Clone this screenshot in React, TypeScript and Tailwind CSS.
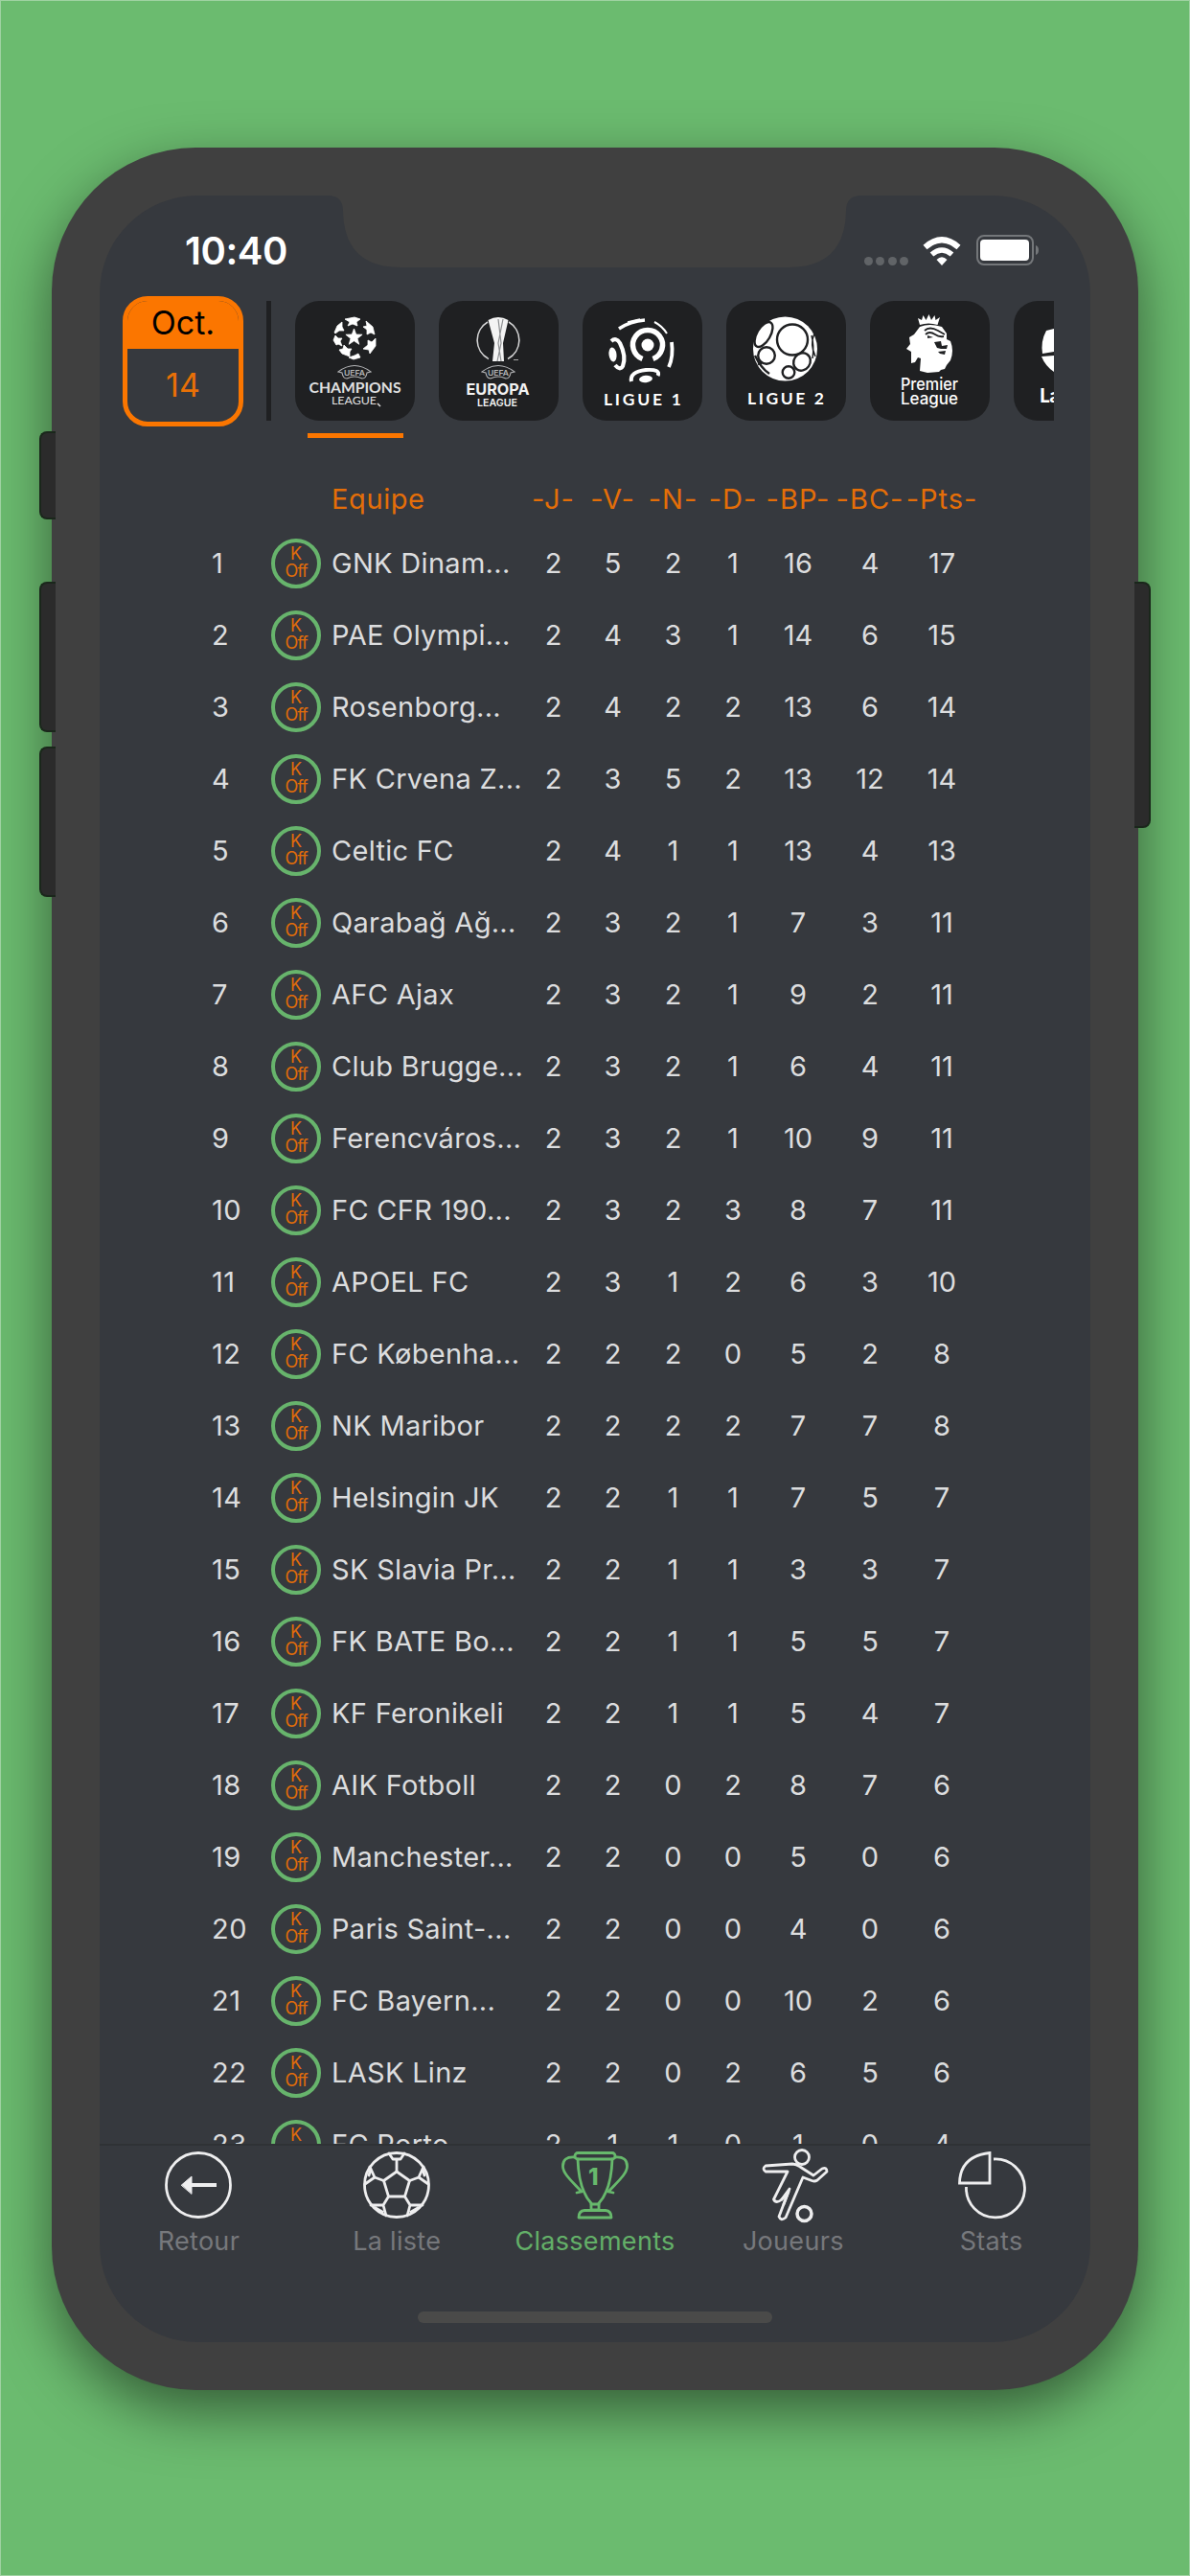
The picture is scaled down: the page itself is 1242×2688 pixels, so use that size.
import React from 'react';
import clsx from 'clsx';

type Standing = {
  name: string;
  stats: number[];
};

const columns = [
  { label: '-J-', width: 'w-[61px]' },
  { label: '-V-', width: 'w-[63px]' },
  { label: '-N-', width: 'w-[63px]' },
  { label: '-D-', width: 'w-[62px]' },
  { label: '-BP-', width: 'w-[74px]' },
  { label: '-BC-', width: 'w-[76px]' },
  { label: '-Pts-', width: 'w-[74px]' },
];

const standings: Standing[] = [
  { name: 'GNK Dinam...', stats: [2, 5, 2, 1, 16, 4, 17] },
  { name: 'PAE Olympi...', stats: [2, 4, 3, 1, 14, 6, 15] },
  { name: 'Rosenborg...', stats: [2, 4, 2, 2, 13, 6, 14] },
  { name: 'FK Crvena Z...', stats: [2, 3, 5, 2, 13, 12, 14] },
  { name: 'Celtic FC', stats: [2, 4, 1, 1, 13, 4, 13] },
  { name: 'Qarabağ Ağ...', stats: [2, 3, 2, 1, 7, 3, 11] },
  { name: 'AFC Ajax', stats: [2, 3, 2, 1, 9, 2, 11] },
  { name: 'Club Brugge...', stats: [2, 3, 2, 1, 6, 4, 11] },
  { name: 'Ferencváros...', stats: [2, 3, 2, 1, 10, 9, 11] },
  { name: 'FC CFR 190...', stats: [2, 3, 2, 3, 8, 7, 11] },
  { name: 'APOEL FC', stats: [2, 3, 1, 2, 6, 3, 10] },
  { name: 'FC Københa...', stats: [2, 2, 2, 0, 5, 2, 8] },
  { name: 'NK Maribor', stats: [2, 2, 2, 2, 7, 7, 8] },
  { name: 'Helsingin JK', stats: [2, 2, 1, 1, 7, 5, 7] },
  { name: 'SK Slavia Pr...', stats: [2, 2, 1, 1, 3, 3, 7] },
  { name: 'FK BATE Bo...', stats: [2, 2, 1, 1, 5, 5, 7] },
  { name: 'KF Feronikeli', stats: [2, 2, 1, 1, 5, 4, 7] },
  { name: 'AIK Fotboll', stats: [2, 2, 0, 2, 8, 7, 6] },
  { name: 'Manchester...', stats: [2, 2, 0, 0, 5, 0, 6] },
  { name: 'Paris Saint-...', stats: [2, 2, 0, 0, 4, 0, 6] },
  { name: 'FC Bayern...', stats: [2, 2, 0, 0, 10, 2, 6] },
  { name: 'LASK Linz', stats: [2, 2, 0, 2, 6, 5, 6] },
  { name: 'FC Porto', stats: [2, 1, 1, 0, 1, 0, 4] },
];

function UefaBadge() {
  return (
    <g fill="none" stroke="#b4b5b7">
      <path d="M45 74 Q62 61 79 74 L75 75 Q74 81 70 81 Q62 77 54 81 Q50 81 49 75 Z" strokeWidth="1.1" />
      <text x="51" y="77.500" fontSize="8" fontWeight="600" fill="#b4b5b7" stroke="none" textLength="22" lengthAdjust="spacingAndGlyphs">UEFA</text>
    </g>
  );
}

function ChampionsLogo() {
  const star = '0,-9 2.2,-3 8.600,-2.800 3.500,1.200 5.300,7.300 0,3.700 -5.300,7.300 -3.500,1.200 -8.600,-2.800 -2.200,-3';
  return (
    <>
      <g fill="#fff" stroke="#fff" strokeWidth=".8" strokeLinejoin="round">
        <polygon points={star} transform="translate(61.500 38)" />
        <polygon points="52,19 62,17 68,19 64,22 65,26 60,24 55,26 57,22" />
        <polygon points="74,21 81,27 83,35 79,33 75,35 75,30 71,27 75,26" />
        <polygon points="84,39 84,47 78,55 77,51 71,50 76,46 76,41 80,43" />
        <polygon points="68,59 61,61 56,59 62,57 66,55" />
        <polygon points="57,58 49,55 46,51 50,50 51,46 55,50 59,50 57,53" />
        <polygon points="43,46 40,41 42,36 45,39 49,39 47,42 49,47 45,45" />
        <polygon points="41,33 44,26 49,22 49,27 51,31 46,31 42,34" />
      </g>
      <UefaBadge />
      <g fill="#e0e0e1" fontFamily="Lato, sans-serif" fontWeight="700">
        <text x="14.500" y="96" fontSize="14.500" textLength="96" lengthAdjust="spacingAndGlyphs">CHAMPIONS</text>
        <text x="38" y="108" fontSize="12" fontWeight="400" textLength="47" lengthAdjust="spacingAndGlyphs">LEAGUE</text>
      </g>
      <path d="M86 107 l3 3" stroke="#ddd" strokeWidth="1.500" />
    </>
  );
}

function EuropaLogo() {
  return (
    <>
      <path d="M51 22 A22 22 0 0 0 52 60.500 M73 22 A22 22 0 0 1 72 60.500" fill="none" stroke="#d5d5d6" strokeWidth="1.600" />
      <path d="M51.500 20 Q62 14 72.500 20 L67 44 L68 63 H56 L58 44 Z" fill="#f4f4f4" />
      <path d="M62 19 L65 44 L61 63 M67 19 L62 44 L65 63" fill="none" stroke="#8d8f91" strokeWidth="1.200" />
      <path d="M78 61.500 h5" stroke="#aaa" />
      <UefaBadge />
      <g fill="#f2f2f2" fontFamily="Inter, sans-serif" fontWeight="700">
        <text x="28.500" y="98" fontSize="16.500" textLength="66" lengthAdjust="spacingAndGlyphs">EUROPA</text>
        <text x="40" y="109.500" fontSize="11" fontWeight="600" textLength="42" lengthAdjust="spacingAndGlyphs">LEAGUE</text>
      </g>
    </>
  );
}

function LigueOneLogo() {
  return (
    <>
      <g fill="none" stroke="#fff">
        <path d="M62.500 60.500 A15.500 15.500 0 1 1 73.500 60.500" strokeWidth="5.500" />
        <path d="M30 42 Q35 37.500 39 44 Q46 58 42 68 Q39 73 34 67" strokeWidth="4.200" />
        <path d="M51 84 Q49 74 66 72 Q82 71 78.500 78" strokeWidth="4" />
        <path d="M38 29 Q50 21 65 20" strokeWidth="3.500" />
        <path d="M47 22 L60 19" strokeWidth="1.500" />
        <path d="M75 22 Q83 26 88 34" strokeWidth="2" />
        <path d="M93 43 Q95 58 90 69" strokeWidth="3.800" />
      </g>
      <g fill="#fff">
        <circle cx="68" cy="46" r="6.500" />
        <ellipse cx="31.500" cy="56" rx="4" ry="7.500" transform="rotate(-8 31.500 56)" />
        <ellipse cx="66" cy="81.500" rx="7" ry="3.700" transform="rotate(-6 66 81.500)" />
      </g>
      <text x="22" y="109" fontSize="17.500" fontWeight="700" fill="#fff" fontFamily="Lato, sans-serif" textLength="81">LIGUE 1</text>
    </>
  );
}

function LigueTwoLogo() {
  return (
    <>
      <circle cx="61.500" cy="50" r="33.500" fill="#fff" />
      <g fill="none" stroke="#1f2022" strokeWidth="2.400">
        <circle cx="69" cy="40.500" r="16" />
        <ellipse cx="39" cy="35" rx="7" ry="14.500" transform="rotate(30 39 35)" />
        <circle cx="42" cy="57" r="8.800" />
        <ellipse cx="79" cy="63.500" rx="8.500" ry="9.500" transform="rotate(35 79 63.500)" />
        <circle cx="65" cy="74.500" r="6.300" />
        <path d="M30 57 Q36 70 45 76 M33 66 L37 65" />
        <path d="M92 34 Q87 45 93 58 M89 36 Q92 47 90 60" strokeWidth="1.500" />
      </g>
      <text x="22" y="108" fontSize="17.500" fontWeight="700" fill="#fff" fontFamily="Lato, sans-serif" textLength="80">LIGUE 2</text>
    </>
  );
}

function PremierLogo() {
  return (
    <>
      <path d="M52 25 L50 18 L54 20 L55.500 15 L58.500 20 L61.500 14 L64 20 L67.500 15 L68.500 20 L73 17 L70.500 25 Q61 22 52 25 Z" fill="#fff" />
      <path d="M52 27 Q62 23 75 27 L80 34 L80 40 L84 42 Q88 52 84 62 L80 67 L78 71 L74 72 L72 74 L60 75 L52 73 L53 60 L50 59 L47 64 L43 65 L43 53 L38 50 L42 45 L41 38 L46 35 Z" fill="#fff" />
      <path d="M57 31 Q62 26 71 31 L78 35 M58 35 Q62 31 68 35 Q72 38 77 37" fill="none" stroke="#1f2022" strokeWidth="1.800" />
      <path d="M67 43 L74 42 L75 47 L81 46 L80 50 L74 50 L70 49 Z M71 53 L79 52 L78 56 L73 55 Z M60 36 L66 38 L60 39 Z" fill="#1f2022" />
      <g fill="#fff" fontFamily="Inter, sans-serif" fontWeight="500">
        <text x="32" y="93" fontSize="17" textLength="60" lengthAdjust="spacingAndGlyphs">Premier</text>
        <text x="32" y="108" fontSize="17" textLength="60" lengthAdjust="spacingAndGlyphs">League</text>
      </g>
    </>
  );
}

function LaLigaLogo() {
  return (
    <>
      <path d="M42 29 L34 31 Q28 42 30 55 L42 53 Z M42 57 L29 58 Q33 68 42 74 Z" fill="#fff" />
      <text x="27" y="106" fontSize="20" fontWeight="900" fill="#fff" fontFamily="Lato, sans-serif">LaLiga</text>
    </>
  );
}

const leagues = [
  { id: 'champions', logo: ChampionsLogo },
  { id: 'europa', logo: EuropaLogo },
  { id: 'ligue1', logo: LigueOneLogo },
  { id: 'ligue2', logo: LigueTwoLogo },
  { id: 'premier', logo: PremierLogo },
  { id: 'laliga', logo: LaLigaLogo },
];

function BackIcon() {
  return (
    <>
      <circle cx="35" cy="35" r="33.500" />
      <path d="M27 35 H54" strokeWidth="4" strokeLinecap="butt" />
      <path d="M17.500 35 L28 26 V44 Z" fill="currentColor" strokeWidth="1" />
    </>
  );
}

function BallIcon() {
  return (
    <>
      <circle cx="35" cy="35" r="33.500" />
      <path d="M35 21 L48.500 30.500 L43.500 47 H26.500 L21.500 30.500 Z" />
      <path d="M35 21 V8 M27 2 L31 8 H39 L43 2" />
      <path d="M21.500 30.500 L12 27 L2 34 M12 27 L7 16 M6 25 L8 18" />
      <path d="M48.500 30.500 L58 27 L68 34 M58 27 L63 16 M64 25 L62 18" />
      <path d="M26.500 47 L21 56 H8 M21 56 L24 67 M13 59 L20 63" />
      <path d="M43.500 47 L49 56 H62 M49 56 L46 67 M57 59 L50 63" />
    </>
  );
}

function TrophyIcon() {
  return (
    <>
      <rect x="14" y="1.500" width="42" height="6.500" rx="3" />
      <path d="M17 8 Q18 40 31 54 V61 H39 V54 Q52 40 53 8" />
      <path d="M14 6 Q1 5 1.500 16 C2 24 12 32 21 42 L16 43" />
      <path d="M56 6 Q69 5 68.500 16 C68 24 58 32 49 42 L54 43" />
      <path d="M31 55 H39 M18 69 Q18 62 24 61.500 H46 Q52 62 52 69 Z" />
      <text x="28" y="35" fontSize="24" fontWeight="800" fill="currentColor" stroke="none">1</text>
    </>
  );
}

function PlayerIcon() {
  return (
    <>
      <circle cx="44" cy="6" r="7.500" />
      <path d="M6 15 L34 13 Q38 13 42 16 L56 25 L65 18 Q70 16 70 21 L60 30 Q57 32 53 30 L45 27 L27 69 Q22 73 20 68 L31 39 L23 50 Q17 55 14.500 50 L29 21 H6 Q2 18 6 15 Z" />
      <path d="M23 50 L30 42 L25 55" />
      <circle cx="46.500" cy="65" r="7.500" strokeWidth="3.500" />
    </>
  );
}

function PieIcon() {
  return (
    <>
      <path d="M33 1.500 V33 H1.500 Q2 5 33 1.500 Z" strokeLinejoin="miter" />
      <path d="M37 8 A30.500 30.500 0 1 1 8.500 37" strokeLinecap="butt" />
    </>
  );
}

const tabs = [
  { label: 'Retour', icon: BackIcon },
  { label: 'La liste', icon: BallIcon },
  { label: 'Classements', icon: TrophyIcon, active: true },
  { label: 'Joueurs', icon: PlayerIcon },
  { label: 'Stats', icon: PieIcon },
];

function StatusBar() {
  return (
    <div className="flex h-[105px] shrink-0 items-start justify-between pt-[33px] pr-[53px] pl-[89px]">
      <span className="text-[40px] leading-[49px] font-semibold tracking-[-0.4px] text-white">10:40</span>
      <div className="mt-[8px] flex h-[32px] items-end">
        <div className="mr-[15px] flex gap-[3.500px]">
          {[0, 1, 2, 3].map((dot) => (
            <span key={dot} className="size-[9px] rounded-full bg-[#616467]" />
          ))}
        </div>
        <svg className="mr-[16px] h-[30px] w-[40px]" viewBox="0 0 40 30" fill="none" stroke="#fff" strokeWidth="6">
          <path d="M2.500 11 Q20 -4.500 37.500 11" />
          <path d="M9.500 18.500 Q20 9.500 30.500 18.500" strokeWidth="5.500" />
          <path d="M14.500 24 Q20 18.500 25.500 24 L20 30 Z" fill="#fff" stroke="none" />
        </svg>
        <svg className="h-[32px] w-[66px]" viewBox="0 0 66 32">
          <rect x="1" y="1" width="58" height="30" rx="7" fill="none" stroke="#74777a" strokeWidth="2" />
          <rect x="4" y="5" width="51" height="22" rx="4" fill="#fff" />
          <path d="M62 11 Q65 12 65 16 Q65 20 62 21 Z" fill="#74777a" />
        </svg>
      </div>
    </div>
  );
}

function LeagueBar() {
  return (
    <div className="flex h-[150px] shrink-0 items-start pr-[38px] pl-[24px]">
      <div className="flex h-[136px] w-[126px] shrink-0 flex-col overflow-hidden rounded-[26px] border-[5px] border-[#fb7600] text-center">
        <div className="h-[50px] bg-[#fb7600] text-[34px] leading-[46px] text-black">Oct.</div>
        <div className="text-[34px] leading-[75px] text-[#e87006]">14</div>
      </div>
      <div className="mt-[5px] ml-[24px] h-[125px] w-[5px] shrink-0 bg-[#1f2022]" />
      <div className="mt-[5px] ml-[25px] flex flex-1 gap-[25px] overflow-hidden">
        {leagues.map((league, idx) => {
          const Logo = league.logo;
          return (
            <div key={league.id} className="flex shrink-0 flex-col items-center">
              <div className="size-[125px] rounded-[25px] bg-[#1f2022]">
                <svg className="size-[125px]" viewBox="0 0 125 125">
                  <Logo />
                </svg>
              </div>
              {idx === 0 && <div className="mt-[13px] h-[5px] w-[100px] bg-[#fb7600]" />}
            </div>
          );
        })}
      </div>
    </div>
  );
}

function TeamBadge() {
  return (
    <div className="flex size-[52px] shrink-0 flex-col items-center justify-center rounded-full border-[4px] border-[#67b46c] pb-[1px] text-[18px] leading-[18px] text-[#e06c0a]">
      <span>K</span>
      <span className="tracking-[-1.200px]">Off</span>
    </div>
  );
}

function StandingsTable() {
  return (
    <div className="flex-1 overflow-hidden pl-[117px] text-[29px]">
      <div className="flex h-[91px] items-center pt-[32px] text-[#e46e08]">
        <div className="w-[326px] shrink-0 pl-[125px] tracking-[0.6px]">Equipe</div>
        {columns.map((col) => (
          <div key={col.label} className={clsx(col.width, 'flex shrink-0 justify-center tracking-[1px] whitespace-nowrap')}>
            {col.label}
          </div>
        ))}
      </div>
      {standings.map((team, idx) => (
        <div key={team.name} className="flex h-[75px] items-center text-[#dcddde]">
          <div className="w-[62px] shrink-0 tracking-[0.5px]">{idx + 1}</div>
          <TeamBadge />
          <div className="w-[212px] shrink-0 pl-[11px] tracking-[0.300px] whitespace-nowrap">{team.name}</div>
          {team.stats.map((value, i) => (
            <div key={columns[i].label} className={clsx(columns[i].width, 'shrink-0 text-center')}>
              {value}
            </div>
          ))}
        </div>
      ))}
    </div>
  );
}

function TabBar() {
  return (
    <div className="flex h-[207px] shrink-0 flex-col items-center border-t-2 border-[#2f3235]">
      <div className="flex w-full pt-[6px]">
        {tabs.map((tab) => {
          const Icon = tab.icon;
          return (
            <div key={tab.label} className={clsx('flex flex-1 flex-col items-center', tab.active ? 'text-[#67b96c]' : 'text-[#eeeeef]')}>
              <svg
                className="size-[70px] overflow-visible"
                viewBox="0 0 70 70"
                fill="none"
                stroke="currentColor"
                strokeWidth="2.800"
                strokeLinejoin="round"
                strokeLinecap="round"
              >
                <Icon />
              </svg>
              <span className={clsx('mt-[7px] text-[27px] leading-[34px] tracking-[0.3px]', tab.active ? 'text-[#63b068]' : 'text-[#76787c]')}>
                {tab.label}
              </span>
            </div>
          );
        })}
      </div>
      <div className="mt-auto mb-[20px] h-[12px] w-[370px] rounded-full bg-[#4a4a49]" />
    </div>
  );
}

export default function App() {
  return (
    <div className="relative flex h-[2688px] w-[1242px] justify-center overflow-hidden border border-[#9fd2a2] bg-[#6bbb6f] pt-[153px] font-[Inter,sans-serif]">
      <div className="relative h-[2340px] w-[1134px] rounded-[150px] bg-[#404040] p-[50px] shadow-[0_22px_60px_rgba(0,0,0,0.5)]">
        {/* hardware buttons */}
        <div className="absolute top-[296px] -left-[13px] h-[92px] w-[17px] rounded-l-[8px] border-y-2 border-l-2 border-[#1a271b] bg-[#2b2b2b]" />
        <div className="absolute top-[453px] -left-[13px] h-[157px] w-[17px] rounded-l-[8px] border-y-2 border-l-2 border-[#1a271b] bg-[#2b2b2b]" />
        <div className="absolute top-[625px] -left-[13px] h-[157px] w-[17px] rounded-l-[8px] border-y-2 border-l-2 border-[#1a271b] bg-[#2b2b2b]" />
        <div className="absolute top-[453px] -right-[13px] h-[257px] w-[17px] rounded-r-[8px] border-y-2 border-r-2 border-[#1a271b] bg-[#2b2b2b]" />

        <div className="relative flex h-[2240px] w-[1034px] flex-col overflow-hidden rounded-[102px] bg-[#36393e]">
          <svg className="absolute top-0 left-[238px] h-[75px] w-[557px]" viewBox="0 0 557 75">
            <path d="M0 0 Q16 0 16 16 Q17 75 76 75 H481 Q540 75 541 16 Q541 0 557 0 Z" fill="#404040" />
          </svg>
          <StatusBar />
          <LeagueBar />
          <StandingsTable />
          <TabBar />
        </div>
      </div>
    </div>
  );
}
